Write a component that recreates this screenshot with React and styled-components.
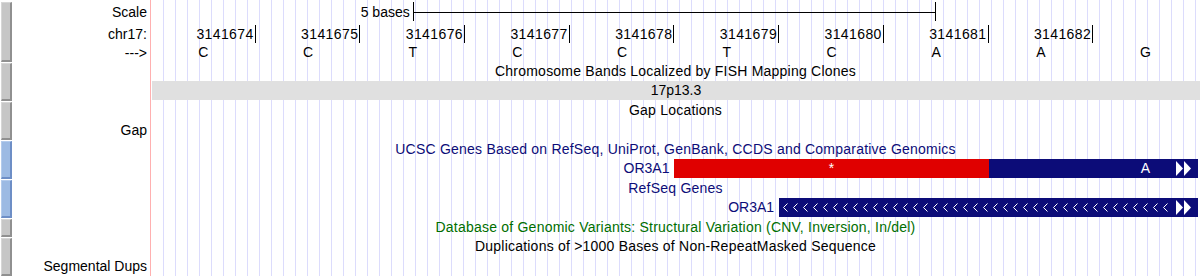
import React from 'react';
import styled, { createGlobalStyle } from 'styled-components';

const NAVY = '#0c0c78';
const STOP_RED = '#e00000';

const GlobalStyle = createGlobalStyle`
  html, body { margin: 0; padding: 0; background: #fff; }
  body {
    font-family: "Liberation Sans", Arial, Helvetica, sans-serif;
    font-size: 14px;
    color: #000;
  }
`;

const bases = ['C', 'C', 'T', 'C', 'C', 'T', 'C', 'A', 'A', 'G'];
const firstPos = 3141674;

function Arrows() {
  return (
    <ArrowSvg width="16" height="15" viewBox="0 0 16 15">
      <polygon points="0,0 7,7.5 0,15" fill="#fff" />
      <polygon points="8,0 15,7.5 8,15" fill="#fff" />
    </ArrowSvg>
  );
}

function Chevrons() {
  return (
    <ChevronSvg height="19">
      <defs>
        <pattern id="chev" width="10" height="19" patternUnits="userSpaceOnUse">
          <path d="M8.5 5.5 L4.5 9.5 L8.5 13.5" stroke="#fff" strokeWidth="1" fill="none" />
        </pattern>
      </defs>
      <rect x="0" y="0" width="100%" height="19" fill="url(#chev)" />
    </ChevronSvg>
  );
}

function App() {
  return (
    <>
      <GlobalStyle />
      <Browser>
        {/* base position / ruler */}
        <Track $h={62}>
          <SideButton $top={2} />
          <Labels $rows="24px 19px 19px">
            <Label $row={1}>Scale</Label>
            <Label $row={2}>chr17:</Label>
            <Label $row={3}>---&gt;</Label>
          </Labels>
          <Lane $rows="24px 19px 19px">
            <HalfGrid>
              <ScaleText>5 bases</ScaleText>
              <Ruler />
            </HalfGrid>
            <BaseGrid>
              {bases.slice(0, 9).map((b, i) => (
                <Coord key={i}>
                  {firstPos + i}
                  <Tick />
                </Coord>
              ))}
            </BaseGrid>
            <BaseGrid>
              {bases.map((b, i) => (
                <Base key={i}>{b}</Base>
              ))}
            </BaseGrid>
          </Lane>
        </Track>

        {/* cytoband */}
        <Track $h={39}>
          <SideButton />
          <Labels $rows="19px 20px" />
          <Lane $rows="19px 19px">
            <Title>Chromosome Bands Localized by FISH Mapping Clones</Title>
            <Band>17p13.3</Band>
          </Lane>
        </Track>

        {/* gap */}
        <Track $h={39}>
          <SideButton />
          <Labels $rows="19px 20px">
            <Label $row={2}>Gap</Label>
          </Labels>
          <Lane $rows="19px 20px">
            <Title>Gap Locations</Title>
          </Lane>
        </Track>

        {/* UCSC genes */}
        <Track $h={39}>
          <SideButton $blue />
          <Labels $rows="19px 20px" />
          <Lane $rows="19px 19px">
            <Title $color={NAVY}>
              UCSC Genes Based on RefSeq, UniProt, GenBank, CCDS and Comparative Genomics
            </Title>
            <BaseGrid>
              <GeneName $end={6}>OR3A1</GeneName>
              <GeneBar $from={6} $to={11} $cols={5}>
                <Codon $span={3} $color={STOP_RED}>*</Codon>
                <Codon $span={1} $color={NAVY} />
                <Codon $span={1} $color={NAVY}>A</Codon>
                <Arrows />
              </GeneBar>
            </BaseGrid>
          </Lane>
        </Track>

        {/* RefSeq */}
        <Track $h={39}>
          <SideButton $blue />
          <Labels $rows="19px 20px" />
          <Lane $rows="19px 19px">
            <Title $color={NAVY}>RefSeq Genes</Title>
            <BaseGrid>
              <GeneName $end={7}>OR3A1</GeneName>
              <GeneBar $from={7} $to={11} $cols={1} $fill={NAVY}>
                <ChevronWrap>
                  <Chevrons />
                </ChevronWrap>
                <Arrows />
              </GeneBar>
            </BaseGrid>
          </Lane>
        </Track>

        {/* DGV */}
        <Track $h={19}>
          <SideButton />
          <Labels $rows="19px" />
          <Lane $rows="19px">
            <Title $color="#006e00">
              Database of Genomic Variants: Structural Variation (CNV, Inversion, In/del)
            </Title>
          </Lane>
        </Track>

        {/* segmental dups */}
        <Track $h={39}>
          <SideButton />
          <Labels $rows="19px 20px">
            <Label $row={2}>Segmental Dups</Label>
          </Labels>
          <Lane $rows="19px 20px">
            <Title>Duplications of &gt;1000 Bases of Non-RepeatMasked Sequence</Title>
          </Lane>
        </Track>
      </Browser>
    </>
  );
}

const Browser = styled.div`
  width: 1200px;
  height: 276px;
  overflow: hidden;
  display: flex;
  flex-direction: column;
`;

const Track = styled.div`
  display: grid;
  grid-template-columns: 13px 137px 1fr;
  height: ${(p) => p.$h}px;
`;

const SideButton = styled.div`
  box-sizing: border-box;
  margin: ${(p) => p.$top || 1}px 1px 0 1px;
  background: ${(p) => (p.$blue ? '#9cbae3' : '#c6c6c6')};
  border-top: 1px solid ${(p) => (p.$blue ? '#b3cbec' : '#d6d6d6')};
  border-left: 1px solid ${(p) => (p.$blue ? '#b3cbec' : '#d6d6d6')};
  border-right: 2px solid ${(p) => (p.$blue ? '#6d8ec6' : '#909090')};
  border-bottom: 2px solid ${(p) => (p.$blue ? '#6d8ec6' : '#909090')};
`;

const Labels = styled.div`
  display: grid;
  grid-template-rows: ${(p) => p.$rows};
  padding-right: 3px;
`;

const Label = styled.div`
  grid-row: ${(p) => p.$row};
  text-align: right;
  display: flex;
  align-items: center;
  justify-content: flex-end;
  white-space: nowrap;
`;

const Lane = styled.div`
  display: grid;
  grid-template-rows: ${(p) => p.$rows};
  border-left: 1px solid #ffb0b0;
  background:
    linear-gradient(#fff, #fff) 0 0 / 1px 100% no-repeat,
    linear-gradient(90deg, #dcdcfc 1px, transparent 1px) 12px 0 / 12px 100% repeat-x;
  min-width: 0;
`;

const BaseGrid = styled.div`
  display: grid;
  grid-template-columns: repeat(10, 104.7px);
  align-items: center;
`;

const HalfGrid = styled.div`
  display: grid;
  grid-template-columns: repeat(20, 52.35px);
  align-items: start;
`;

const ScaleText = styled.div`
  grid-column: 1 / 6;
  justify-self: end;
  padding-right: 3px;
  line-height: 24px;
`;

const Ruler = styled.div`
  grid-column: 6 / 16;
  margin-top: 2px;
  height: 19px;
  border-left: 1px solid #000;
  border-right: 1px solid #000;
  background: linear-gradient(#000, #000) 0 10px / 100% 1px no-repeat;
`;

const Coord = styled.div`
  display: flex;
  justify-content: flex-end;
  align-items: center;
  height: 19px;
  letter-spacing: 0.4px;
`;

const Tick = styled.span`
  display: inline-block;
  width: 1px;
  height: 18px;
  margin-left: 1px;
  background: #000;
`;

const Base = styled.div`
  text-align: center;
  line-height: 19px;
`;

const Title = styled.div`
  text-align: center;
  line-height: 19px;
  white-space: nowrap;
  letter-spacing: 0.22px;
  color: ${(p) => p.$color || '#000'};
`;

const Band = styled.div`
  margin-left: 1px;
  background: #e0e0e0;
  text-align: center;
  line-height: 19px;
`;

const GeneName = styled.div`
  grid-column: 1 / ${(p) => p.$end};
  justify-self: end;
  padding-right: 5px;
  color: ${NAVY};
  line-height: 19px;
`;

const GeneBar = styled.div`
  grid-column: ${(p) => p.$from} / ${(p) => p.$to};
  position: relative;
  height: 19px;
  display: grid;
  grid-template-columns: repeat(${(p) => p.$cols}, 1fr);
  background: ${(p) => p.$fill || 'transparent'};
`;

const Codon = styled.div`
  grid-column: span ${(p) => p.$span};
  background: ${(p) => p.$color};
  color: #fff;
  text-align: center;
  line-height: 19px;
`;

const ChevronWrap = styled.div`
  padding: 0 26px 0 0;
  height: 19px;
`;

const ChevronSvg = styled.svg`
  display: block;
  width: 100%;
`;

const ArrowSvg = styled.svg`
  position: absolute;
  right: 6px;
  top: 2px;
`;

export default App;
